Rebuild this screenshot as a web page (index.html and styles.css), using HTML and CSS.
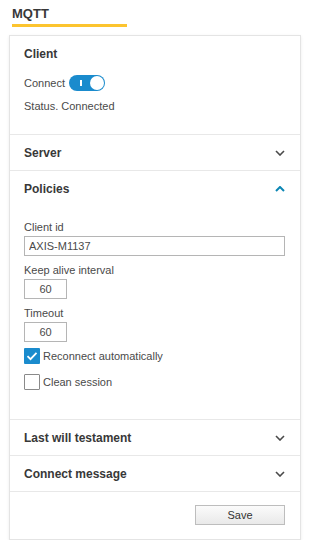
FILE: index.html
```html
<!DOCTYPE html>
<html lang="en">
<head>
    <meta charset="UTF-8">
    <meta name="viewport" content="width=device-width, initial-scale=1.0">
    <title>MQTT</title>
    <link rel="stylesheet" href="styles.css">
</head>
<body>

    <div class="page-title">
        <h1>MQTT</h1>
    </div>

    <div class="card">
        <!-- Client -->
        <section class="section">
            <div class="section-header">Client</div>
            <div class="section-body client-body">
                <div class="toggle-row">
                    <span>Connect</span>
                    <span class="toggle"><span class="toggle-mark"></span><span class="toggle-knob"></span></span>
                </div>
                <p class="status">Status. Connected</p>
            </div>
        </section>

        <section class="section">
            <div class="section-header">
                <span>Server</span>
                <svg class="chevron" viewBox="0 0 10 6" width="10" height="6"><path d="M1 1l4 4 4-4"/></svg>
            </div>
        </section>

        <!-- Policies -->
        <section class="section">
            <div class="section-header">
                <span>Policies</span>
                <svg class="chevron open" viewBox="0 0 10 6" width="10" height="6"><path d="M1 5l4-4 4 4"/></svg>
            </div>
            <div class="section-body policies-body">
                <div class="field">
                    <label>Client id</label>
                    <input type="text" class="input wide" value="AXIS-M1137">
                </div>
                <div class="field">
                    <label>Keep alive interval</label>
                    <input type="text" class="input short" value="60">
                </div>
                <div class="field">
                    <label>Timeout</label>
                    <input type="text" class="input short" value="60">
                </div>
                <div class="check-row first">
                    <span class="checkbox checked">
                        <svg viewBox="0 0 16 16" width="16" height="16"><path d="M3.5 8.2l3 3 6-6.4"/></svg>
                    </span>
                    <span>Reconnect automatically</span>
                </div>
                <div class="check-row">
                    <span class="checkbox"></span>
                    <span>Clean session</span>
                </div>
            </div>
        </section>

        <section class="section">
            <div class="section-header">
                <span>Last will testament</span>
                <svg class="chevron" viewBox="0 0 10 6" width="10" height="6"><path d="M1 1l4 4 4-4"/></svg>
            </div>
        </section>

        <section class="section">
            <div class="section-header">
                <span>Connect message</span>
                <svg class="chevron" viewBox="0 0 10 6" width="10" height="6"><path d="M1 1l4 4 4-4"/></svg>
            </div>
        </section>

        <div class="card-footer">
            <button class="btn">Save</button>
        </div>
    </div>

</body>
</html>
```

FILE: styles.css
```css
:root {
    --text-color: #4a4a4a;
    --head-color: #383838;
    --border-color: #e8e8e8;
    --blue: #1a8bcd;
    --teal: #0b86b4;
    --yellow: #fcc42f;
}

* {
    margin: 0;
    padding: 0;
    box-sizing: border-box;
}

body {
    font-family: 'Liberation Sans', Arial, sans-serif;
    font-size: 11px;
    color: var(--text-color);
    background-color: #ffffff;
}

/* Title */
.page-title {
    padding: 6px 0 0 12px;
}

.page-title h1 {
    display: inline-block;
    width: 115px;
    font-size: 13px;
    line-height: 15px;
    font-weight: bold;
    color: var(--head-color);
    padding-bottom: 3px;
    border-bottom: 3px solid var(--yellow);
}

/* Card */
.card {
    margin: 8px 9px 0;
    border: 1px solid #e4e4e4;
    box-shadow: 0 1px 3px rgba(0, 0, 0, 0.08);
    background: #ffffff;
}

.section {
    border-bottom: 1px solid var(--border-color);
}

.section-header {
    height: 35px;
    padding: 0 15px 0 14px;
    display: flex;
    align-items: center;
    justify-content: space-between;
    font-size: 12px;
    font-weight: bold;
    color: var(--head-color);
}

.chevron {
    fill: none;
    stroke: #4a4a4a;
    stroke-width: 1.6;
}

.chevron.open {
    stroke: var(--teal);
    stroke-width: 2;
}

.section-body {
    padding: 0 15px 0 14px;
}

/* Client */
.client-body {
    padding-top: 4px;
    padding-bottom: 21px;
}

.toggle-row {
    display: flex;
    align-items: center;
    gap: 4px;
    height: 16px;
}

.toggle {
    position: relative;
    width: 36px;
    height: 16px;
    border-radius: 8px;
    background: var(--blue);
}

.toggle-mark {
    position: absolute;
    left: 11px;
    top: 5px;
    width: 2px;
    height: 6px;
    background: #ffffff;
}

.toggle-knob {
    position: absolute;
    right: 1px;
    top: 1px;
    width: 14px;
    height: 14px;
    border-radius: 50%;
    background: #ffffff;
}

.status {
    margin-top: 8px;
    line-height: 14px;
}

/* Policies */
.policies-body {
    padding-top: 14px;
    padding-bottom: 29px;
}

.field + .field {
    margin-top: 7px;
}

.field label {
    display: block;
    line-height: 14px;
    margin-bottom: 2px;
}

.input {
    display: block;
    height: 20px;
    border: 1px solid #b5b5b5;
    font-family: inherit;
    font-size: 11px;
    color: #4a4a4a;
    padding: 0 4px;
    outline: none;
}

.input.wide {
    width: 100%;
}

.input.short {
    width: 43px;
    text-align: center;
}

.check-row {
    display: flex;
    align-items: center;
    gap: 3px;
    height: 16px;
    margin-top: 10px;
}

.check-row.first {
    margin-top: 6px;
}

.checkbox {
    width: 16px;
    height: 16px;
    border: 1px solid #8a8a8a;
    border-radius: 1px;
    background: #fff;
}

.checkbox.checked {
    border: none;
    background: var(--blue);
}

.checkbox svg {
    display: block;
    fill: none;
    stroke: #ffffff;
    stroke-width: 1.8;
}

/* Footer */
.card-footer {
    display: flex;
    justify-content: flex-end;
    padding: 13px 15px 14px;
}

.btn {
    width: 90px;
    height: 20px;
    font-family: inherit;
    font-size: 11px;
    color: #333;
    border: 1px solid #bdbdbd;
    background: linear-gradient(#fbfbfb, #e9e9e9);
    cursor: pointer;
}
```
